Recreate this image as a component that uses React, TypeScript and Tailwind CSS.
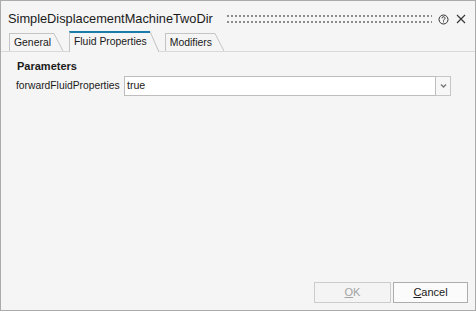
import React from 'react';

const sans = "font-['Liberation_Sans',Arial,sans-serif]";

const Slant: React.FC = () => (
  <svg className="w-[9px] self-stretch" viewBox="0 0 9 18" preserveAspectRatio="none">
    <line x1="0" y1="0.5" x2="9" y2="18" stroke="#c4c4c4" strokeWidth="1" />
  </svg>
);

const Tab: React.FC<{ label: string; active?: boolean; className?: string }> = ({ label, active, className }) => (
  <div className={`flex ${active ? 'h-[21px] -mb-px bg-[#f5f5f5] z-10' : 'h-[18px]'} ${className || ''}`}>
    <div
      className={`flex items-center border-l border-[#c4c4c4] pl-[4px] pr-[3px] text-[10.4px] text-[#1a1a1a] ${
        active ? 'border-t-2 border-t-[#1a7cab] pb-[2px]' : 'border-t'
      }`}
    >
      {label}
    </div>
    <Slant />
  </div>
);

const App: React.FC = () => {
  return (
    <div className={`flex h-[311px] w-[476px] flex-col border border-[#ababab] bg-[#f5f5f5] ${sans}`}>
      {/* Header */}
      <div className="flex h-[30px] items-center pl-[7px] pr-[9px] pt-[6px]">
        <span className="text-[12.8px] leading-[16px] text-[#1a1a1a]">SimpleDisplacementMachineTwoDir</span>
        <svg className="ml-[14px] mr-[6px] h-[8px] flex-1" preserveAspectRatio="none">
          <defs>
            <pattern id="grip" width="4" height="6" patternUnits="userSpaceOnUse">
              <rect x="0" y="0" width="2" height="2" fill="#8c8c8c" />
            </pattern>
          </defs>
          <rect x="0" y="0" width="100%" height="8" fill="url(#grip)" />
        </svg>
        <svg className="h-[11px] w-[11px]" viewBox="0 0 11 11">
          <circle cx="5.5" cy="5.5" r="4.5" fill="none" stroke="#333" strokeWidth="1" />
          <path d="M4 4.3a1.5 1.5 0 1 1 2.3 1.2c-.5.3-.8.6-.8 1.2" fill="none" stroke="#333" strokeWidth="1" />
          <rect x="5" y="7.4" width="1" height="1" fill="#333" />
        </svg>
        <svg className="ml-[7px] h-[10px] w-[10px]" viewBox="0 0 10 10">
          <path d="M1 1L9 9M9 1L1 9" stroke="#333" strokeWidth="1.1" />
        </svg>
      </div>

      {/* Tabs */}
      <div className="flex h-[21px] items-end border-b border-[#d9d9d9] pl-[8px]">
        <Tab label="General" />
        <Tab label="Fluid Properties" active className="ml-[6px]" />
        <Tab label="Modifiers" className="ml-[6px]" />
      </div>

      {/* Content */}
      <div className="flex flex-col pl-[15px] pt-[7px]">
        <div className="pl-px text-[11px] font-bold leading-[14px] text-[#1a1a1a]">Parameters</div>
        <div className="mt-[3px] flex h-[20px] items-center">
          <span className="w-[108px] text-[10.3px] text-[#1a1a1a]">forwardFluidProperties</span>
          <div className="flex h-[20px] w-[312px] items-center border border-[#bdbdbd] bg-white pl-[2px] text-[10.6px] text-[#1a1a1a]">
            true
          </div>
          <div className="flex h-[20px] w-[15px] items-center justify-center border border-l-0 border-[#c6c6c6] bg-[#f7f7f7]">
            <svg className="h-[6px] w-[7px]" viewBox="0 0 7 6">
              <path d="M1 1.5L3.5 4L6 1.5" fill="none" stroke="#7a7a7a" strokeWidth="1.5" />
            </svg>
          </div>
        </div>
      </div>

      {/* Footer */}
      <div className="mt-auto flex justify-end gap-[2px] pb-[7px] pr-[7px]">
        <button className="flex h-[21px] w-[77px] items-center justify-center border border-[#cccccc] bg-[#f4f4f4] text-[11px] text-[#a3a3a3]">
          <span><span className="underline">O</span>K</span>
        </button>
        <button className="flex h-[21px] w-[75px] items-center justify-center border border-[#adadad] bg-[#fbfbfb] text-[11px] text-[#1a1a1a]">
          <span><span className="underline">C</span>ancel</span>
        </button>
      </div>
    </div>
  );
};

export default App;
